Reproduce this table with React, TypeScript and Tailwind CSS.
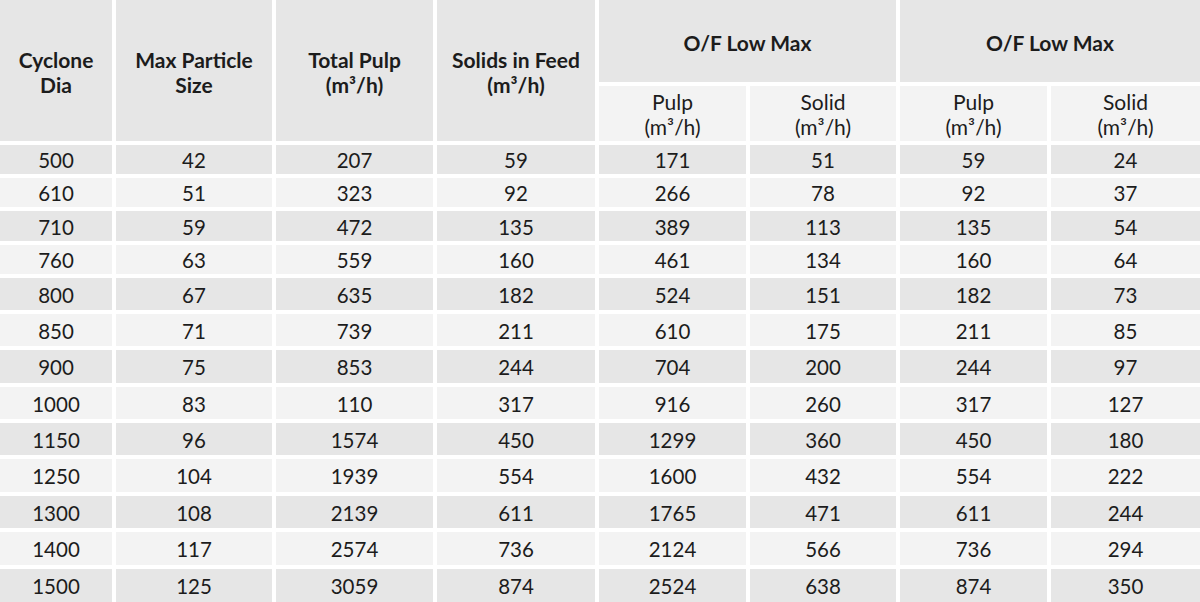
const rows = [
  [500, 42, 207, 59, 171, 51, 59, 24],
  [610, 51, 323, 92, 266, 78, 92, 37],
  [710, 59, 472, 135, 389, 113, 135, 54],
  [760, 63, 559, 160, 461, 134, 160, 64],
  [800, 67, 635, 182, 524, 151, 182, 73],
  [850, 71, 739, 211, 610, 175, 211, 85],
  [900, 75, 853, 244, 704, 200, 244, 97],
  [1000, 83, 110, 317, 916, 260, 317, 127],
  [1150, 96, 1574, 450, 1299, 360, 450, 180],
  [1250, 104, 1939, 554, 1600, 432, 554, 222],
  [1300, 108, 2139, 611, 1765, 471, 611, 244],
  [1400, 117, 2574, 736, 2124, 566, 736, 294],
  [1500, 125, 3059, 874, 2524, 638, 874, 350],
];

function HeadCell({ children, className = "" }: { children: React.ReactNode; className?: string }) {
  return (
    <div className={`flex items-center justify-center text-center font-bold text-[21px] leading-[25px] bg-[#e6e6e6] ${className}`}>
      <div>{children}</div>
    </div>
  );
}

export default function App() {
  return (
    <div className="w-[1200px] h-[602px] bg-white overflow-hidden text-[20.5px] text-[#1c1c1c] font-['Lato','Noto_Sans',sans-serif]">
      <div className="grid gap-[4px] grid-cols-[112px_156px_157px_158px_147px_146px_147px_149px] grid-rows-[82px_55px_29px_29px_30px_29px_32px_32px_33px_32px_32px_33px_32px_33px_33px]">
        <HeadCell className="row-span-2 pt-[2px]">Cyclone<br />Dia</HeadCell>
        <HeadCell className="row-span-2 pt-[2px]">Max Particle<br />Size</HeadCell>
        <HeadCell className="row-span-2 pt-[2px]">Total Pulp<br />(m³/h)</HeadCell>
        <HeadCell className="row-span-2 pt-[2px]">Solids in Feed<br />(m³/h)</HeadCell>
        <HeadCell className="col-span-2 pt-[3px]">O/F Low Max</HeadCell>
        <HeadCell className="col-span-2 pt-[3px]">O/F Low Max</HeadCell>
        {["Pulp", "Solid", "Pulp", "Solid"].map((h, i) => (
          <div key={i} className="flex items-center justify-center text-center bg-[#f3f3f3] text-[21px] leading-[25px]">
            <div>{h}<br />(m³/h)</div>
          </div>
        ))}
        {rows.map((r, ri) =>
          r.map((v, ci) => (
            <div
              key={`${ri}-${ci}`}
              className={`flex items-center justify-center pt-[2px] ${ri % 2 === 0 ? "bg-[#e6e6e6]" : "bg-[#f3f3f3]"}`}
            >
              {v}
            </div>
          ))
        )}
      </div>
    </div>
  );
}
